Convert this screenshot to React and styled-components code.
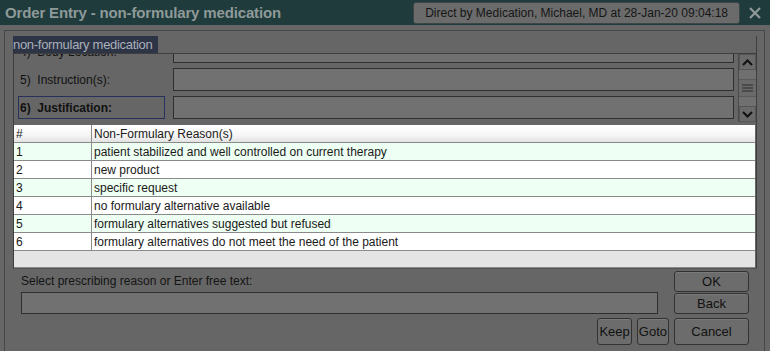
import React from 'react';
import styled, { createGlobalStyle } from 'styled-components';

const reasons = [
  'patient stabilized and well controlled on current therapy',
  'new product',
  'specific request',
  'no formulary alternative available',
  'formulary alternatives suggested but refused',
  'formulary alternatives do not meet the need of the patient',
];

const fields = [
  { n: '4)', label: 'Body Location:' },
  { n: '5)', label: 'Instruction(s):' },
  { n: '6)', label: 'Justification:', active: true },
];

export default function App() {
  return (
    <Window>
      <GlobalStyle />
      <TitleBar>
        <Title>Order Entry - non-formulary medication</Title>
        <Stamp>Direct by Medication, Michael, MD at 28-Jan-20 09:04:18</Stamp>
        <Close>
          <svg width="12" height="12" viewBox="0 0 12 12">
            <path d="M1 1 L11 11 M11 1 L1 11" stroke="#8e9a99" strokeWidth="2.2" />
          </svg>
        </Close>
      </TitleBar>
      <Frame>
        <Panel>
          <LegendRow>
            <Legend>non-formulary medication</Legend>
          </LegendRow>
          <Viewport>
            <Fields>
              {fields.map((f) => (
                <FieldRow key={f.n}>
                  <FieldLabel active={f.active}>
                    {f.n}&nbsp; {f.label}
                  </FieldLabel>
                  <FieldInput />
                </FieldRow>
              ))}
            </Fields>
            <ScrollBar>
              <ScrollButton>
                <svg width="11" height="7" viewBox="0 0 11 7">
                  <path d="M1 6 L5.5 1.5 L10 6" fill="none" stroke="#111" strokeWidth="2" />
                </svg>
              </ScrollButton>
              <Track>
                <Thumb>
                  <svg width="11" height="8" viewBox="0 0 11 8">
                    <path d="M0 1h11M0 4h11M0 7h11" stroke="#2a2a2a" strokeWidth="1" />
                  </svg>
                </Thumb>
              </Track>
              <ScrollButton>
                <svg width="11" height="7" viewBox="0 0 11 7">
                  <path d="M1 1 L5.5 5.5 L10 1" fill="none" stroke="#111" strokeWidth="2" />
                </svg>
              </ScrollButton>
            </ScrollBar>
          </Viewport>
          <Table>
            <HeadRow>
              <NumCell>#</NumCell>
              <TextCell>Non-Formulary Reason(s)</TextCell>
            </HeadRow>
            {reasons.map((r, i) => (
              <Row key={r} odd={i % 2 === 0}>
                <NumCell>{i + 1}</NumCell>
                <TextCell>{r}</TextCell>
              </Row>
            ))}
            <Filler />
          </Table>
        </Panel>
        <Bottom>
          <EntryRow>
            <Entry>
              <EntryLabel>Select prescribing reason or Enter free text:</EntryLabel>
              <EntryInput />
            </Entry>
            <Stack>
              <Button>OK</Button>
              <Button>Back</Button>
            </Stack>
          </EntryRow>
          <ActionRow>
            <Button small>Keep</Button>
            <Button small>Goto</Button>
            <Button wide>Cancel</Button>
          </ActionRow>
        </Bottom>
      </Frame>
    </Window>
  );
}

const GlobalStyle = createGlobalStyle`
  html, body {
    margin: 0;
    background: #666;
  }
  body {
    font-family: "Liberation Sans", Arial, sans-serif;
  }
`;

const Window = styled.div`
  width: 770px;
  height: 351px;
  display: flex;
  flex-direction: column;
  background: #666;
  overflow: hidden;
`;

const TitleBar = styled.div`
  height: 25px;
  flex: none;
  display: flex;
  align-items: center;
  padding: 0 4px 0 5px;
  background: #1f3b3b;
`;

const Title = styled.div`
  font-size: 15px;
  font-weight: bold;
  color: #8e9a99;
  letter-spacing: -0.15px;
`;

const Stamp = styled.div`
  margin-left: auto;
  height: 22px;
  padding: 0 11px;
  box-sizing: border-box;
  display: flex;
  align-items: center;
  background: #6b6b6b;
  border: 1px solid #3c4646;
  border-radius: 3px;
  font-size: 12px;
  color: #161616;
`;

const Close = styled.div`
  width: 22px;
  margin-left: 4px;
  display: flex;
  justify-content: center;
`;

const Frame = styled.div`
  flex: 1;
  margin: 5px 5px 0 4px;
  padding: 5px 7px 0 8px;
  border: 1px solid #464646;
  border-bottom: none;
  display: flex;
  flex-direction: column;
`;

const Panel = styled.div`
  display: flex;
  flex-direction: column;
  border-left: 1px solid #3e3e3e;
  border-right: 1px solid #3e3e3e;
  border-bottom: 1px solid #555;
`;

const LegendRow = styled.div`
  height: 17px;
  margin-left: -1px;
  display: flex;
`;

const Legend = styled.div`
  width: 145px;
  background: #2c3446;
  color: #aab0ba;
  font-size: 13px;
  line-height: 17px;
  letter-spacing: -0.3px;
  white-space: nowrap;
`;

const Viewport = styled.div`
  height: 68px;
  display: flex;
  border-top: 1px solid #3e3e3e;
  overflow: hidden;
`;

const Fields = styled.div`
  flex: 1;
  display: flex;
  flex-direction: column;
  gap: 5px;
  margin-top: -14px;
  padding: 0 4px 0 4px;
`;

const FieldRow = styled.div`
  display: flex;
  align-items: center;
  height: 23px;
  gap: 8px;
`;

const FieldLabel = styled.div`
  width: 147px;
  height: 23px;
  box-sizing: border-box;
  display: flex;
  align-items: center;
  padding-left: 1px;
  font-size: 12px;
  font-weight: ${(p) => (p.active ? 'bold' : 'normal')};
  color: #111;
  border: 1px solid ${(p) => (p.active ? '#28305c' : 'transparent')};
  white-space: pre;
`;

const FieldInput = styled.div`
  flex: 1;
  height: 23px;
  box-sizing: border-box;
  background: #717171;
  border: 1px solid #2f2f2f;
`;

const ScrollBar = styled.div`
  width: 17px;
  display: flex;
  flex-direction: column;
  background: #707070;
  border-left: 1px solid #4a4a4a;
`;

const ScrollButton = styled.div`
  height: 16px;
  flex: none;
  display: flex;
  align-items: center;
  justify-content: center;
  background: #6a6a6a;
  border: 1px solid #555;
  box-sizing: border-box;
`;

const Track = styled.div`
  flex: 1;
  display: flex;
  align-items: center;
  justify-content: center;
`;

const Thumb = styled.div`
  width: 100%;
  height: 16px;
  display: flex;
  align-items: center;
  justify-content: center;
  background: #6a6a6a;
  border-top: 1px solid #5a5a5a;
  border-bottom: 1px solid #5a5a5a;
`;

const Table = styled.div`
  margin-top: 3px;
  margin-right: 1px;
  background: #e4e4e4;
  display: flex;
  flex-direction: column;
  font-size: 12px;
  color: #1a1a1a;
`;

const HeadRow = styled.div`
  height: 18px;
  display: flex;
  background: linear-gradient(#ffffff, #f6f6f6 60%, #e2e2e2);
  border-bottom: 1px solid #8a8a8a;
  box-sizing: border-box;
`;

const Row = styled.div`
  height: 18px;
  display: flex;
  background: ${(p) => (p.odd ? '#eefff3' : '#ffffff')};
  border-bottom: 1px solid #8a8a8a;
  box-sizing: border-box;
`;

const NumCell = styled.div`
  width: 78px;
  padding-left: 2px;
  display: flex;
  align-items: center;
  border-right: 1px solid #8a8a8a;
  box-sizing: border-box;
`;

const TextCell = styled.div`
  flex: 1;
  padding-left: 2px;
  display: flex;
  align-items: center;
  white-space: nowrap;
`;

const Filler = styled.div`
  height: 16px;
  border-bottom: 1px solid #8a8a8a;
`;

const Bottom = styled.div`
  display: flex;
  flex-direction: column;
  padding: 2px 8px 0 8px;
  gap: 4px;
`;

const EntryRow = styled.div`
  display: flex;
  gap: 16px;
`;

const Entry = styled.div`
  flex: 1;
  display: flex;
  flex-direction: column;
  justify-content: flex-end;
`;

const EntryLabel = styled.div`
  font-size: 12px;
  color: #141414;
  margin-bottom: 4px;
`;

const EntryInput = styled.div`
  height: 22px;
  box-sizing: border-box;
  background: #717171;
  border: 1px solid #2f2f2f;
`;

const Stack = styled.div`
  width: 75px;
  display: flex;
  flex-direction: column;
  gap: 1px;
`;

const ActionRow = styled.div`
  display: flex;
  justify-content: flex-end;
  gap: 5px;
`;

const Button = styled.div`
  height: ${(p) => (p.small || p.wide ? '27px' : '21px')};
  width: ${(p) => (p.small ? 'auto' : '75px')};
  padding: ${(p) => (p.small ? '0 1px' : '0')};
  box-sizing: border-box;
  display: flex;
  align-items: center;
  justify-content: center;
  background: #6c6c6c;
  border: 1px solid #323232;
  border-radius: 3px;
  box-shadow: inset 0 1px 0 #7a7a7a;
  font-size: 13px;
  color: #111;
`;
